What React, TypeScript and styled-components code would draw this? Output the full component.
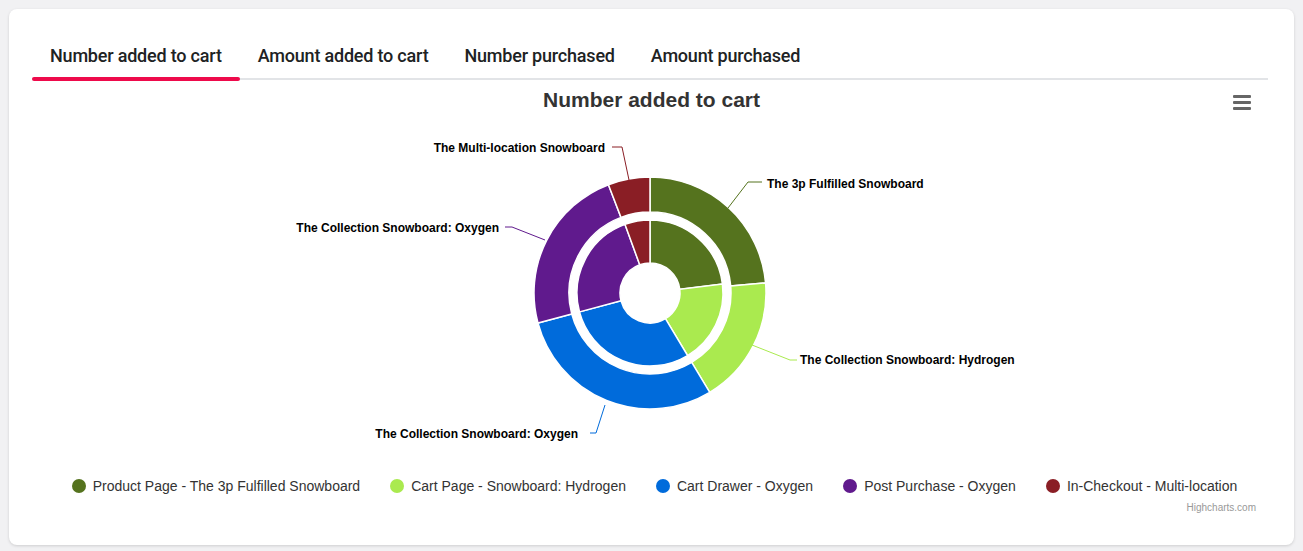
import React from "react";
import styled, { createGlobalStyle } from "styled-components";

const Global = createGlobalStyle`
  html, body { margin: 0; background: #f1f1f3; }
  body { padding: 9px; font-family: "Liberation Sans", Arial, sans-serif; }
`;

const Card = styled.div`
  width: 1285px; height: 536px; box-sizing: border-box;
  background: #fff; border-radius: 8px;
  box-shadow: 0 1px 3px rgba(0,0,0,0.15);
  padding: 33px 26px 0 23px;
  display: flex; flex-direction: column;
`;
const Tabs = styled.div`
  display: flex; border-bottom: 2px solid #e2e4e7; height: 36px; box-sizing: content-box;
`;
const Tab = styled.div<{ $active?: boolean }>`
  padding: 0 18px; font-family: Roboto, sans-serif; font-size: 18px; font-weight: 500; color: #202223;
  line-height: 28px; position: relative; letter-spacing: -0.2px;
  &::after {
    content: ""; position: absolute; left: 0; right: 0; bottom: -3px; height: 4px;
    border-radius: 2px; background: ${p => (p.$active ? "#ee0a4b" : "transparent")};
  }
`;
const ChartWrap = styled.div`
  margin-left: -23px; margin-right: -26px; position: relative; height: 375px;
`;
const Title = styled.div`
  position: absolute; left: 0; right: 0; top: 8px; text-align: center;
  font-size: 21px; font-weight: bold; color: #333;
`;
const Menu = styled.div`
  position: absolute; left: 1224px; top: 15px; width: 18px;
  display: flex; flex-direction: column; gap: 3px;
  span { height: 3px; background: #666; border-radius: 1px; }
`;
const Legend = styled.div`
  display: flex; justify-content: center; gap: 30px; margin-top: 23px;
  margin-left: -23px; margin-right: -26px; padding-left: 6px;
`;
const Item = styled.div`
  display: flex; align-items: center; gap: 7px; font-size: 14px; color: #333;
`;
const Dot = styled.span<{ $c: string }>`
  width: 14px; height: 14px; border-radius: 50%; background: ${p => p.$c};
`;
const Credit = styled.div`
  align-self: flex-end; margin-right: 12px; margin-top: 8px; font-size: 10px; color: #999;
`;

const cx = 650, cy = 293;
function arc(r1: number, r2: number, a0: number, a1: number) {
  const p = (r: number, a: number) => {
    const t = (a * Math.PI) / 180;
    return `${(cx + r * Math.sin(t)).toFixed(2)} ${(cy - r * Math.cos(t)).toFixed(2)}`;
  };
  const large = a1 - a0 > 180 ? 1 : 0;
  return `M${p(r2, a0)} A${r2} ${r2} 0 ${large} 1 ${p(r2, a1)} L${p(r1, a1)} A${r1} ${r1} 0 ${large} 0 ${p(r1, a0)} Z`;
}
const C = ["#55731e", "#aaea4f", "#006bdb", "#601a8d", "#8a1e25"];
const outer = [0, 85, 149, 255, 339, 360];
const inner = [0, 83, 149, 255, 340, 360];

const labels = [
  { t: "The 3p Fulfilled Snowboard", x: 767, y: 188, a: "start", c: C[0], l: "M728 208 L748 182 L762 182" },
  { t: "The Collection Snowboard: Hydrogen", x: 800, y: 364, a: "start", c: C[1], l: "M752 345 L790 360 L797 360" },
  { t: "The Collection Snowboard: Oxygen", x: 578, y: 438, a: "end", c: C[2], l: "M605 405 L596 433 L590 433" },
  { t: "The Collection Snowboard: Oxygen", x: 499, y: 232, a: "end", c: C[3], l: "M545 240 L512 227 L505 227" },
  { t: "The Multi-location Snowboard", x: 605, y: 152, a: "end", c: C[4], l: "M629 180 L622 147 L612 147" },
];

const legend = [
  "Product Page - The 3p Fulfilled Snowboard",
  "Cart Page - Snowboard: Hydrogen",
  "Cart Drawer - Oxygen",
  "Post Purchase - Oxygen",
  "In-Checkout - Multi-location",
];

export default function App() {
  return (
    <>
      <Global />
      <Card>
        <Tabs>
          <Tab $active>Number added to cart</Tab>
          <Tab>Amount added to cart</Tab>
          <Tab>Number purchased</Tab>
          <Tab>Amount purchased</Tab>
        </Tabs>
        <ChartWrap>
          <Title>Number added to cart</Title>
          <Menu><span /><span /><span /></Menu>
          <svg width="1285" height="375" viewBox="9 80 1285 375">
            {C.map((c, i) => (
              <path key={"o" + i} d={arc(81, 116, outer[i], outer[i + 1])} fill={c} stroke="#fff" strokeWidth="1.5" />
            ))}
            {C.map((c, i) => (
              <path key={"i" + i} d={arc(30, 73, inner[i], inner[i + 1])} fill={c} stroke="#fff" strokeWidth="1.5" />
            ))}
            {labels.map((l, i) => (
              <g key={i}>
                <path d={l.l} fill="none" stroke={l.c} strokeWidth="1" />
                <text x={l.x} y={l.y} textAnchor={l.a as any} fontSize="12" fontWeight="bold" fill="#000"
                  fontFamily="Liberation Sans, Arial, sans-serif">{l.t}</text>
              </g>
            ))}
          </svg>
        </ChartWrap>
        <Legend>
          {legend.map((t, i) => (
            <Item key={i}><Dot $c={C[i]} />{t}</Item>
          ))}
        </Legend>
        <Credit>Highcharts.com</Credit>
      </Card>
    </>
  );
}
